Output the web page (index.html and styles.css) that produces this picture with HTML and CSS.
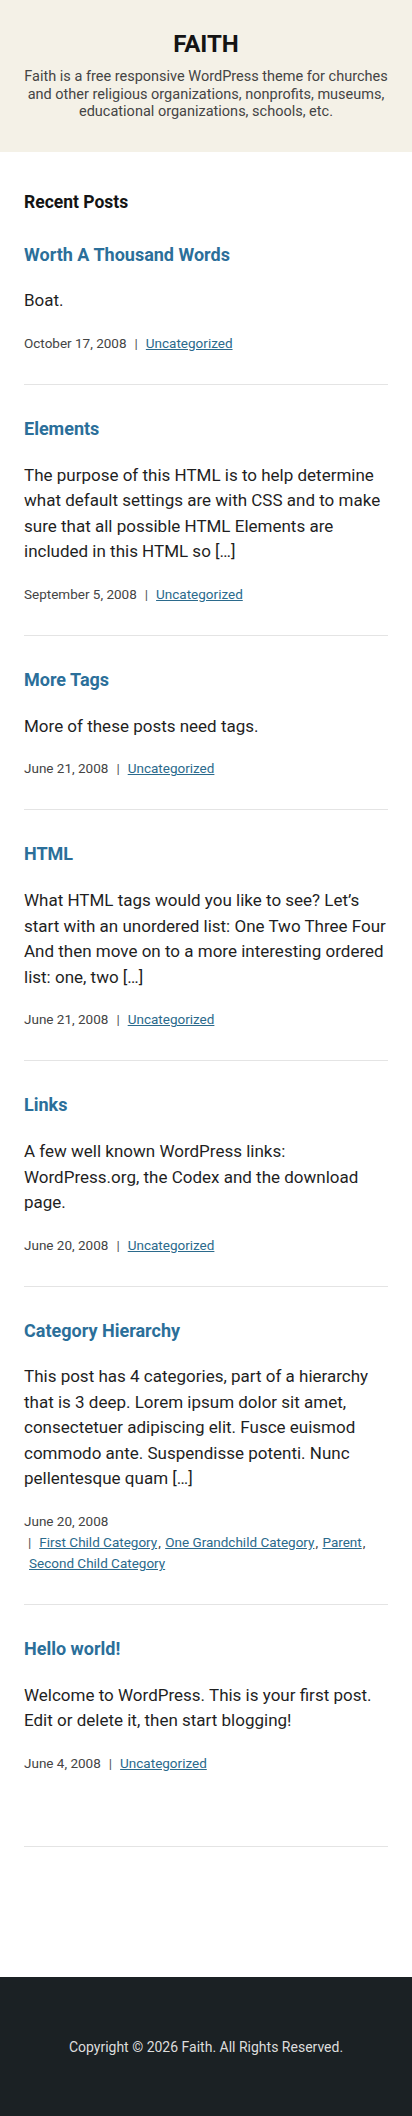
FILE: index.html
```html
<!DOCTYPE html>
<html lang="en">
<head>
<meta charset="utf-8">
<meta name="viewport" content="width=device-width, initial-scale=1">
<title>Faith</title>
<link rel="stylesheet" href="styles.css">
</head>
<body>
<header class="site-header">
  <h1 class="site-title">FAITH</h1>
  <p class="site-desc">Faith is a free responsive WordPress theme for churches and other religious organizations, nonprofits, museums, educational organizations, schools, etc.</p>
</header>
<main class="content">
  <h2 class="section-title">Recent Posts</h2>

  <article class="post">
    <h3 class="post-title"><a href="#">Worth A Thousand Words</a></h3>
    <p class="post-excerpt">Boat.</p>
    <div class="post-meta"><span class="date">October 17, 2008</span><span class="cats"><span class="sep">|</span><a href="#">Uncategorized</a></span></div>
  </article>

  <article class="post">
    <h3 class="post-title"><a href="#">Elements</a></h3>
    <p class="post-excerpt">The purpose of this HTML is to help determine what default settings are with CSS and to make sure that all possible HTML Elements are included in this HTML so […]</p>
    <div class="post-meta"><span class="date">September 5, 2008</span><span class="cats"><span class="sep">|</span><a href="#">Uncategorized</a></span></div>
  </article>

  <article class="post">
    <h3 class="post-title"><a href="#">More Tags</a></h3>
    <p class="post-excerpt">More of these posts need tags.</p>
    <div class="post-meta"><span class="date">June 21, 2008</span><span class="cats"><span class="sep">|</span><a href="#">Uncategorized</a></span></div>
  </article>

  <article class="post">
    <h3 class="post-title"><a href="#">HTML</a></h3>
    <p class="post-excerpt">What HTML tags would you like to see? Let’s start with an unordered list: One Two Three Four And then move on to a more interesting ordered list: one, two […]</p>
    <div class="post-meta"><span class="date">June 21, 2008</span><span class="cats"><span class="sep">|</span><a href="#">Uncategorized</a></span></div>
  </article>

  <article class="post">
    <h3 class="post-title"><a href="#">Links</a></h3>
    <p class="post-excerpt">A few well known WordPress links: WordPress.org, the Codex and the download page.</p>
    <div class="post-meta"><span class="date">June 20, 2008</span><span class="cats"><span class="sep">|</span><a href="#">Uncategorized</a></span></div>
  </article>

  <article class="post">
    <h3 class="post-title"><a href="#">Category Hierarchy</a></h3>
    <p class="post-excerpt">This post has 4 categories, part of a hierarchy that is 3 deep. Lorem ipsum dolor sit amet, consectetuer adipiscing elit. Fusce euismod commodo ante. Suspendisse potenti. Nunc pellentesque quam […]</p>
    <div class="post-meta"><span class="date">June 20, 2008</span><span class="cats"><span class="sep">|</span><a href="#">First Child Category</a>, <a href="#">One Grandchild Category</a>, <a href="#">Parent</a>, <a href="#">Second Child Category</a></span></div>
  </article>

  <article class="post">
    <h3 class="post-title"><a href="#">Hello world!</a></h3>
    <p class="post-excerpt">Welcome to WordPress. This is your first post. Edit or delete it, then start blogging!</p>
    <div class="post-meta"><span class="date">June 4, 2008</span><span class="cats"><span class="sep">|</span><a href="#">Uncategorized</a></span></div>
  </article>
</main>
<footer class="site-footer">
  <p class="copyright">Copyright © 2026 Faith. All Rights Reserved.</p>
</footer>
</body>
</html>
```

FILE: styles.css
```css
* { box-sizing: border-box; }
html, body { margin: 0; padding: 0; }
body {
  font-family: Roboto, "Liberation Sans", sans-serif;
  color: #1f1f1f;
  background: #ffffff;
}
a { color: inherit; }

.site-header {
  background: #f4f1e7;
  padding: 30px 24px 31px;
  text-align: center;
}
.site-title {
  margin: 0;
  font-size: 24px;
  line-height: 29px;
  font-weight: 700;
  color: #141414;
}
.site-desc {
  margin: 9px 0 0;
  font-size: 14.5px;
  line-height: 17.5px;
  color: #444444;
}

.content {
  padding: 42px 24px 0;
  margin-bottom: 130px;
}
.section-title {
  margin: 0;
  font-size: 17.5px;
  line-height: 17px;
  font-weight: 700;
  color: #141414;
}
.post {
  padding: 32px 0 30px;
  border-bottom: 1px solid #e4e4e4;
}
.post:last-child { padding-bottom: 72px; }
.post-title {
  margin: 0 0 22.5px;
  font-size: 18px;
  line-height: 23.4px;
  font-weight: 700;
}
.post-title a {
  color: #2b6f9a;
  text-decoration: none;
}
.post-excerpt {
  margin: 0 0 19px;
  font-size: 17px;
  line-height: 25.5px;
  color: #1f1f1f;
}
.post-meta {
  display: flex;
  flex-wrap: wrap;
  font-size: 13.5px;
  line-height: 21px;
  color: #444444;
}
.post-meta .date { margin-right: 4px; }
.post-meta .cats { padding-left: 4px; }
.post-meta .sep { margin-right: 7px; color: #555; }
.post-meta a {
  color: #2b6a8c;
  text-decoration: underline;
  margin: 0 1px;
}

.site-footer {
  background: #1b2124;
  padding: 60px 24px;
  text-align: center;
}
.copyright {
  margin: 0;
  font-size: 14px;
  line-height: 20px;
  color: #dddddd;
}
```
